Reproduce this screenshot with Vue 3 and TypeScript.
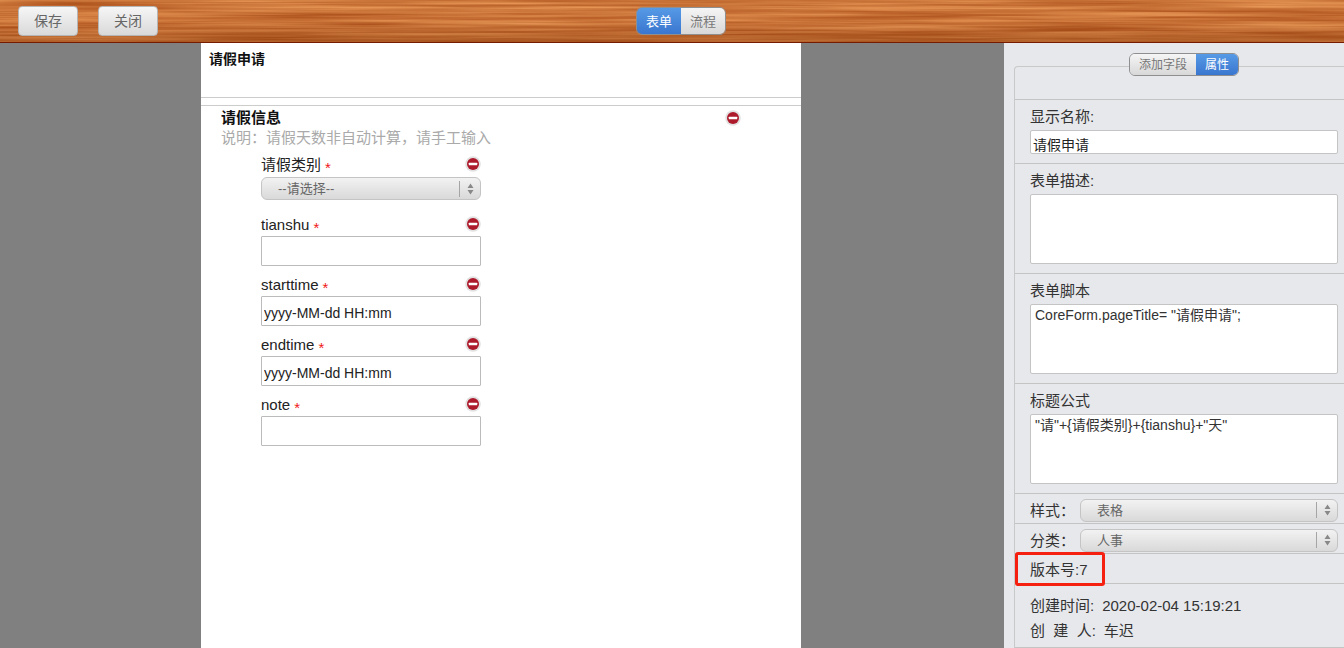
<script setup lang="ts">
const fields = [
  { name: 'tianshu', placeholder: '' },
  { name: 'starttime', placeholder: 'yyyy-MM-dd HH:mm' },
  { name: 'endtime', placeholder: 'yyyy-MM-dd HH:mm' },
  { name: 'note', placeholder: '' },
]

const scriptText = 'CoreForm.pageTitle= "请假申请";'
const titleFormula = '"请"+{请假类别}+{tianshu}+"天"'
</script>

<template>
  <div class="page">
    <header class="topbar">
      <svg class="wood" width="1344" height="42" aria-hidden="true">
        <filter id="grain" x="0" y="0" width="100%" height="100%" color-interpolation-filters="sRGB">
          <feTurbulence type="fractalNoise" baseFrequency="0.005 0.3" numOctaves="3" seed="11" />
          <feColorMatrix
            type="matrix"
            values="0 0 0 0.34 0.62
                    0 0 0 0.40 0.25
                    0 0 0 0.34 0.05
                    0 0 0 0 1"
          />
        </filter>
        <rect width="1344" height="42" filter="url(#grain)" />
      </svg>
      <div class="wood-shade"></div>
      <button class="btn"><span>保存</span></button>
      <button class="btn"><span>关闭</span></button>
      <div class="seg seg-main">
        <span class="seg-item on">表单</span>
        <span class="seg-item">流程</span>
      </div>
    </header>

    <main class="main">
      <section class="canvas">
        <div class="sheet">
          <div class="form-head">请假申请</div>
          <div class="form-section">
            <div class="section-title">请假信息</div>
            <div class="section-desc">说明&#xFF1A;请假天数非自动计算&#xFF0C;请手工输入</div>
            <svg class="del del-section" viewBox="0 0 16 16"><use href="#del-icon" /></svg>

            <div class="field">
              <div class="field-label">
                <span>请假类别</span><i class="star">*</i>
                <svg class="del" viewBox="0 0 16 16">
                  <symbol id="del-icon" viewBox="0 0 16 16">
                    <circle cx="8" cy="8" r="7.8" fill="#e2e2e2" />
                    <circle cx="8" cy="8" r="6" fill="#ad1a2c" />
                    <rect x="3.8" y="6.8" width="8.4" height="2.5" rx="0.4" fill="#fff" />
                  </symbol>
                  <use href="#del-icon" />
                </svg>
              </div>
              <div class="select field-select">
                <span class="select-text">--请选择--</span>
                <svg class="arrows" width="7" height="16" viewBox="0 0 7 16">
                  <path d="M3.5 2.5 6.5 7H0.5Z M0.5 9H6.5L3.5 13.5Z" fill="#888" />
                </svg>
              </div>
            </div>

            <div v-for="f in fields" :key="f.name" class="field">
              <div class="field-label">
                <span>{{ f.name }}</span><i class="star">*</i>
                <svg class="del" viewBox="0 0 16 16"><use href="#del-icon" /></svg>
              </div>
              <input class="field-input" :value="f.placeholder" />
            </div>
          </div>
        </div>
      </section>

      <aside class="panel">
        <div class="box">
          <div class="seg seg-panel">
            <span class="seg-item">添加字段</span>
            <span class="seg-item on">属性</span>
          </div>
          <div class="row row-blank"></div>
          <div class="row row-name">
            <label>显示名称:</label>
            <input class="text" value="请假申请" />
          </div>
          <div class="row row-area">
            <label>表单描述:</label>
            <textarea class="area"></textarea>
          </div>
          <div class="row row-area">
            <label>表单脚本</label>
            <textarea class="area" :value="scriptText"></textarea>
          </div>
          <div class="row row-area">
            <label>标题公式</label>
            <textarea class="area" :value="titleFormula"></textarea>
          </div>
          <div class="row row-pick">
            <label>样式&#xFF1A;</label>
            <div class="select">
              <span class="select-text">表格</span>
              <svg class="arrows" width="7" height="16" viewBox="0 0 7 16">
                <path d="M3.5 2.5 6.5 7H0.5Z M0.5 9H6.5L3.5 13.5Z" fill="#888" />
              </svg>
            </div>
          </div>
          <div class="row row-pick">
            <label>分类&#xFF1A;</label>
            <div class="select">
              <span class="select-text">人事</span>
              <svg class="arrows" width="7" height="16" viewBox="0 0 7 16">
                <path d="M3.5 2.5 6.5 7H0.5Z M0.5 9H6.5L3.5 13.5Z" fill="#888" />
              </svg>
            </div>
          </div>
          <div class="row row-version">版本号:7</div>
          <div class="row row-info">
            <div class="info-line"><span class="info-key">创建时间:</span>2020-02-04 15:19:21</div>
            <div class="info-line"><span class="info-key">创&nbsp;&nbsp;建&nbsp;&nbsp;人:</span>车迟</div>
          </div>
        </div>
        <div class="mark"></div>
      </aside>
    </main>
  </div>
</template>

<style>
html,
body {
  margin: 0;
  overflow: hidden;
}
</style>

<style scoped>
.page {
  width: 1344px;
  height: 648px;
  overflow: hidden;
  font-family: 'Liberation Sans', 'Noto Sans CJK SC', sans-serif;
  font-size: 14px;
  color: #222;
  background: #808080;
}

.topbar {
  position: relative;
  display: flex;
  align-items: center;
  height: 42px;
  padding-left: 18px;
  box-sizing: content-box;
  border-bottom: 1px solid #761a00;
  overflow: hidden;
}

.wood {
  position: absolute;
  left: 0;
  top: 0;
}

.wood-shade {
  position: absolute;
  inset: 0;
  background: linear-gradient(180deg, rgba(255, 190, 120, 0.08) 0%, rgba(255, 190, 120, 0) 50%, rgba(120, 45, 0, 0.32) 100%);
}

.btn {
  position: relative;
  width: 60px;
  height: 30px;
  margin-right: 20px;
  padding: 0 0 3px;
  font: inherit;
  color: #666;
  background: linear-gradient(180deg, #f6f6f6, #d9d9d9);
  border: 1px solid #b5b5b5;
  border-radius: 4px;
}

.seg {
  display: inline-flex;
  border: 1px solid #8f8f8f;
  border-radius: 6px;
  overflow: hidden;
}

.seg-main {
  position: relative;
  margin-left: 458px;
  height: 26px;
}

.seg-item {
  display: flex;
  align-items: center;
  justify-content: center;
  width: 44px;
  padding-bottom: 2px;
  font-size: 13px;
  color: #777;
  background: linear-gradient(180deg, #f5f5f5, #d8d8d8);
}

.seg-item.on {
  color: #fff;
  background: linear-gradient(180deg, #569ae6, #3a76cf);
}

.main {
  display: flex;
  height: 605px;
}

.canvas {
  flex: 1;
  padding-left: 201px;
}

.sheet {
  width: 600px;
  height: 100%;
  background: #fff;
}

.form-head {
  height: 55px;
  padding: 6px 8px 0;
  box-sizing: border-box;
  line-height: 20px;
  font-weight: bold;
  color: #111;
  border-bottom: 1px solid #ccc;
}

.form-section {
  position: relative;
  margin-top: 7px;
  padding: 2px 0 0 20px;
  border-top: 1px solid #ccc;
}

.section-title {
  font-size: 15px;
  line-height: 20px;
  font-weight: bold;
  color: #111;
}

.section-desc {
  font-size: 15px;
  line-height: 20px;
  color: #aaa;
}

.del {
  position: absolute;
  right: 0;
  top: 2px;
  width: 16px;
  height: 16px;
}

.del-section {
  left: 524px;
  right: auto;
  top: 4px;
}

.field {
  width: 220px;
  height: 60px;
  margin-left: 40px;
  box-sizing: border-box;
}

.form-section > .section-desc + .del + .field {
  margin-top: 6px;
}

.field-label {
  position: relative;
  height: 22px;
  line-height: 22px;
  font-size: 15px;
  color: #222;
}

.star {
  margin-left: 4px;
  font-style: normal;
  font-size: 15px;
  vertical-align: -3px;
  color: #f01818;
}

.field-input {
  display: block;
  width: 100%;
  height: 30px;
  padding: 3px 2px 0;
  box-sizing: border-box;
  font: inherit;
  color: #222;
  border: 1px solid #bbb;
  border-radius: 1px;
  outline: none;
}

.select {
  display: flex;
  align-items: center;
  flex: 1;
  height: 23px;
  box-sizing: border-box;
  border: 1px solid #c4c4c4;
  border-radius: 6px;
  background: linear-gradient(180deg, #f2f2f2, #d9d9d9);
  color: #666;
  font-size: 13px;
}

.field-select {
  margin-top: 1px;
}

.select-text {
  flex: 1;
  padding: 0 0 2px 16px;
}

.arrows {
  padding: 0 6px 0 7px;
  border-left: 1px solid #a5a5a5;
}

.panel {
  position: relative;
  width: 340px;
  height: 100%;
  padding: 23px 0 0 10px;
  box-sizing: border-box;
  background: #e7e8ec;
}

.box {
  position: relative;
  height: 582px;
  box-sizing: border-box;
  border: 1px solid #c9c9c9;
  border-right: 0;
  border-radius: 4px 0 0 0;
}

.seg-panel {
  position: absolute;
  left: 114px;
  top: -14px;
  height: 21px;
}

.seg-panel .seg-item {
  width: 42px;
  font-size: 12px;
}

.seg-panel .seg-item:first-child {
  width: 66px;
}

.row {
  box-sizing: border-box;
  padding: 0 6px 0 15px;
  border-bottom: 1px solid #c4c4c4;
  color: #333;
}

.row label {
  display: block;
  font-size: 15px;
  color: #333;
}

.row-blank {
  height: 33px;
}

.row-name {
  height: 64px;
}

.row-name label {
  padding-top: 7px;
  line-height: 20px;
  height: 30px;
  box-sizing: border-box;
}

.text {
  display: block;
  width: 100%;
  height: 24px;
  padding: 3px 2px 0;
  box-sizing: border-box;
  font: inherit;
  color: #222;
  border: 1px solid #c4c4c4;
  border-radius: 2px;
  outline: none;
}

.row-area {
  height: 110px;
}

.row-area label {
  height: 30px;
  line-height: 33px;
}

.area {
  display: block;
  width: 100%;
  height: 70px;
  padding: 1px 4px;
  box-sizing: border-box;
  font: inherit;
  line-height: 18px;
  color: #333;
  border: 1px solid #c4c4c4;
  border-radius: 2px;
  outline: none;
  resize: none;
}

.row-pick {
  display: flex;
  align-items: center;
  height: 30px;
  padding-top: 3px;
}

.row-pick label {
  width: 50px;
  flex: none;
  padding-bottom: 2px;
}

.row-version {
  height: 30px;
  padding-top: 1px;
  line-height: 30px;
  font-size: 15px;
}

.row-info {
  height: 64px;
  padding-top: 9px;
  font-size: 15px;
}

.info-line {
  height: 25px;
  line-height: 25px;
}

.info-key {
  margin-right: 8px;
}

.mark {
  position: absolute;
  left: 11px;
  top: 509px;
  width: 90px;
  height: 34px;
  box-sizing: border-box;
  border: 3px solid #f5200f;
  border-radius: 3px;
}
</style>
